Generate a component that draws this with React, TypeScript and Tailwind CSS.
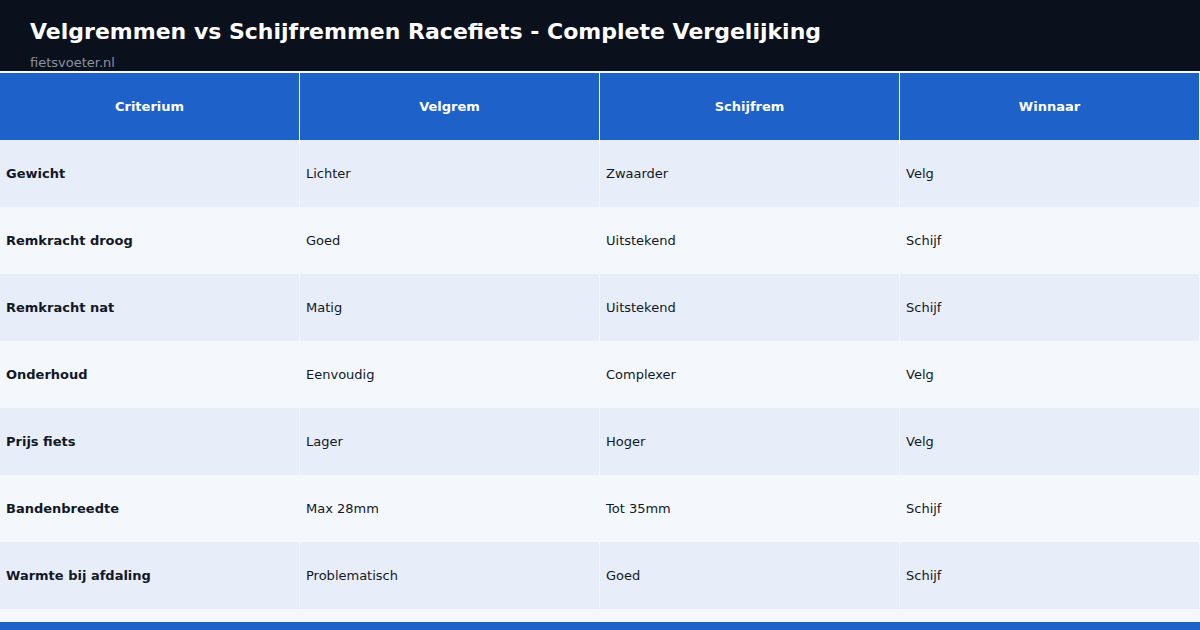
const rows = [
  ['Gewicht', 'Lichter', 'Zwaarder', 'Velg'],
  ['Remkracht droog', 'Goed', 'Uitstekend', 'Schijf'],
  ['Remkracht nat', 'Matig', 'Uitstekend', 'Schijf'],
  ['Onderhoud', 'Eenvoudig', 'Complexer', 'Velg'],
  ['Prijs fiets', 'Lager', 'Hoger', 'Velg'],
  ['Bandenbreedte', 'Max 28mm', 'Tot 35mm', 'Schijf'],
  ['Warmte bij afdaling', 'Problematisch', 'Goed', 'Schijf'],
];

const headers = ['Criterium', 'Velgrem', 'Schijfrem', 'Winnaar'];

export default function App() {
  return (
    <div
      className="w-[1200px] h-[630px] overflow-hidden bg-[#f4f7fc] flex flex-col"
      style={{ fontFamily: '"DejaVu Sans", sans-serif' }}
    >
      <header className="h-[71px] bg-[#0a101c] px-[30px] pt-[19px]">
        <h1 className="text-[22px] leading-[26px] font-bold text-white">
          Velgremmen vs Schijfremmen Racefiets - Complete Vergelijking
        </h1>
        <p className="text-[13px] leading-[16px] mt-[10px] text-[#8b93a1]">fietsvoeter.nl</p>
      </header>

      <div className="mt-[2px] grid grid-cols-[299px_299px_299px_299px] gap-x-px bg-white w-[1199px]">
        {headers.map((h) => (
          <div
            key={h}
            className="h-[67px] bg-[#1e61c9] flex items-center justify-center text-[13px] font-bold text-white"
          >
            {h}
          </div>
        ))}
      </div>

      <div className="grid grid-cols-[299px_299px_299px_299px] gap-x-px w-[1199px]">
        {rows.map((r, i) =>
          r.map((c, j) => (
            <div
              key={i + '-' + j}
              className={
                'h-[67px] flex items-center px-[6px] text-[13px] text-[#111827] ' +
                (i % 2 === 0 ? 'bg-[#e8eef9] ' : 'bg-[#f4f7fc] ') +
                (j === 0 ? 'font-bold' : '')
              }
            >
              {c}
            </div>
          ))
        )}
      </div>

      <div className="mt-auto h-[8px] bg-[#1e61c9]" />
    </div>
  );
}
